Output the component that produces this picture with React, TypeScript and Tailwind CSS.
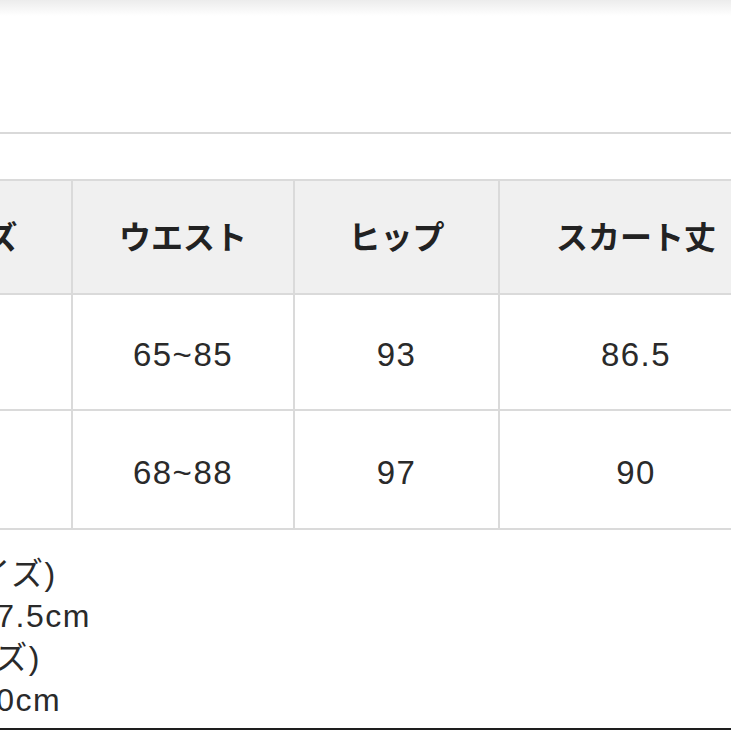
import React from 'react';

const jp = "font-['Liberation_Sans','Noto_Sans_CJK_JP',sans-serif]";

const headers = ['サイズ', 'ウエスト', 'ヒップ', 'スカート丈'];
const rows = [
  ['S', '65~85', '93', '86.5'],
  ['L', '68~88', '97', '90'],
];
const rowHeights = ['h-[116px]', 'h-[119px]'];

const notes = ['(Sサイズ)', '着丈87.5cm', 'Lサイズ)', '着丈90cm'];

export default function App() {
  return (
    <div className={`w-[731px] h-[731px] overflow-hidden bg-white ${jp}`}>
      {/* top fade */}
      <div className="h-[16px] bg-gradient-to-b from-[#ececec] to-white" />
      <div className="mt-[116px] h-[2px] bg-[#d9d9d9]" />

      {/* size table */}
      <div className="mt-[45px] ml-[-131px] w-[905px] border-t-2 border-[#dadada]">
        <div className="grid grid-cols-[204px_222px_205px_274px] bg-[#f0f0f0]">
          {headers.map((h) => (
            <div
              key={h}
              className="h-[114px] pt-[2px] flex items-center justify-center border-r-2 border-b-2 border-[#dadada] text-[32px] font-bold text-[#222]"
            >
              {h}
            </div>
          ))}
        </div>
        {rows.map((row, i) => (
          <div key={i} className="grid grid-cols-[204px_222px_205px_274px] bg-white">
            {row.map((cell, j) => (
              <div
                key={j}
                className={`${rowHeights[i]} pt-[6px] flex items-center justify-center border-r-2 border-b-2 border-[#dadada] text-[33px] tracking-[1.5px] text-[#2a2a2a]`}
              >
                {cell}
              </div>
            ))}
          </div>
        ))}
      </div>

      {/* notes */}
      <div className="mt-[23px] ml-[-90px] text-[32px] leading-[42px] tracking-[1.5px] text-[#2a2a2a]">
        {notes.map((n) => (
          <div key={n} className="whitespace-nowrap">
            {n}
          </div>
        ))}
      </div>

      <div className="mt-[7px] h-[2px] bg-[#1e1e1e]" />
    </div>
  );
}
